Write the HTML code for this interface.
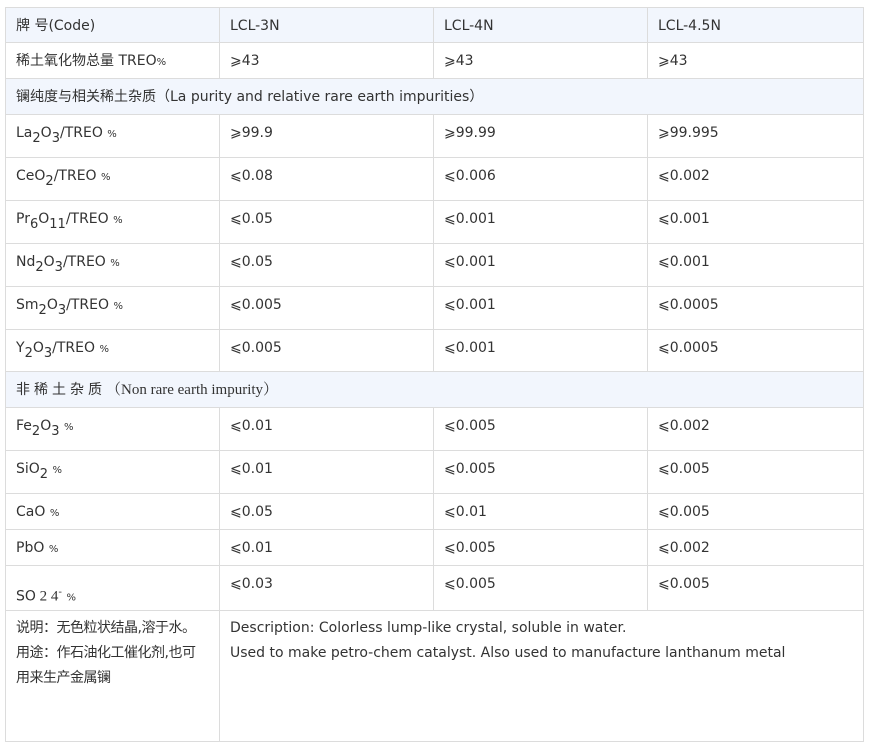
<!DOCTYPE html>
<html><head><meta charset="utf-8">
<style>
html,body{margin:0;padding:0;background:#fff;}
body{width:869px;height:749px;position:relative;overflow:hidden;font-family:"DejaVu Sans","Noto Sans CJK SC",sans-serif;font-size:14px;color:#333;}
table{position:absolute;left:5px;top:7px;border-collapse:collapse;table-layout:fixed;width:858px;}
td{border:1px solid #dcdcdc;vertical-align:top;padding:9px 10px 0 10px;line-height:18px;box-sizing:border-box;overflow:hidden;white-space:nowrap;}
tr.h td{background:#f2f6fd;}
sub{font-size:13px;vertical-align:-5px;line-height:0;}
.p{font-size:10px;}
.s{font-family:"Liberation Serif","Noto Serif CJK SC",serif;font-size:15px;}
.cj{letter-spacing:4px;}
.d td{line-height:25px;padding-top:5px;white-space:normal;}
.d td:first-child{letter-spacing:-0.5px;}
</style></head><body>
<table>
<colgroup><col style="width:214px"><col style="width:214px"><col style="width:214px"><col style="width:216px"></colgroup>
<tr class="h" style="height:35px"><td>牌&nbsp;号(Code)</td><td>LCL-3N</td><td>LCL-4N</td><td>LCL-4.5N</td></tr>
<tr style="height:36px"><td>稀土氧化物总量 TREO<span class="p">%</span></td><td>⩾43</td><td>⩾43</td><td>⩾43</td></tr>
<tr class="h" style="height:36px"><td colspan="4">镧纯度与相关稀土杂质（La purity and relative rare earth impurities）</td></tr>
<tr style="height:43px"><td>La<sub>2</sub>O<sub>3</sub>/TREO <span class="p">%</span></td><td>⩾99.9</td><td>⩾99.99</td><td>⩾99.995</td></tr>
<tr style="height:43px"><td>CeO<sub>2</sub>/TREO <span class="p">%</span></td><td>⩽0.08</td><td>⩽0.006</td><td>⩽0.002</td></tr>
<tr style="height:43px"><td>Pr<sub>6</sub>O<sub>11</sub>/TREO <span class="p">%</span></td><td>⩽0.05</td><td>⩽0.001</td><td>⩽0.001</td></tr>
<tr style="height:43px"><td>Nd<sub>2</sub>O<sub>3</sub>/TREO <span class="p">%</span></td><td>⩽0.05</td><td>⩽0.001</td><td>⩽0.001</td></tr>
<tr style="height:43px"><td>Sm<sub>2</sub>O<sub>3</sub>/TREO <span class="p">%</span></td><td>⩽0.005</td><td>⩽0.001</td><td>⩽0.0005</td></tr>
<tr style="height:42px"><td>Y<sub>2</sub>O<sub>3</sub>/TREO <span class="p">%</span></td><td>⩽0.005</td><td>⩽0.001</td><td>⩽0.0005</td></tr>
<tr class="h" style="height:36px"><td colspan="4"><span class="cj">非稀土杂质</span><span class="s">（Non rare earth impurity）</span></td></tr>
<tr style="height:43px"><td>Fe<sub>2</sub>O<sub>3</sub> <span class="p">%</span></td><td>⩽0.01</td><td>⩽0.005</td><td>⩽0.002</td></tr>
<tr style="height:43px"><td>SiO<sub>2</sub> <span class="p">%</span></td><td>⩽0.01</td><td>⩽0.005</td><td>⩽0.005</td></tr>
<tr style="height:36px"><td>CaO <span class="p">%</span></td><td>⩽0.05</td><td>⩽0.01</td><td>⩽0.005</td></tr>
<tr style="height:36px"><td>PbO <span class="p">%</span></td><td>⩽0.01</td><td>⩽0.005</td><td>⩽0.002</td></tr>
<tr style="height:45px"><td><div style="padding-top:9px">SO<span class="s"> 2 4</span><sup style="font-size:10px">-</sup> <span class="p">%</span></div></td><td>⩽0.03</td><td>⩽0.005</td><td>⩽0.005</td></tr>
<tr class="d" style="height:131px"><td>说明：无色粒状结晶,溶于水。<br>用途：作石油化工催化剂,也可<br>用来生产金属镧</td><td colspan="3">Description: Colorless lump-like crystal, soluble in water.<br>Used to make petro-chem catalyst. Also used to manufacture lanthanum metal</td></tr>
</table>
</body></html>
